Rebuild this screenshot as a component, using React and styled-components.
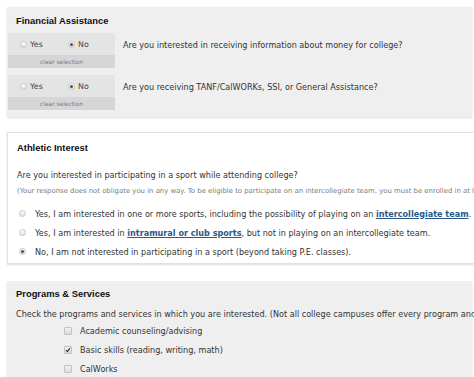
import React from 'react';
import styled, { createGlobalStyle } from 'styled-components';

const GlobalStyle = createGlobalStyle`
    html, body {
        margin: 0;
        padding: 0;
        background: #ffffff;
        overflow: hidden;
    }
    body {
        font-family: "DejaVu Sans", Verdana, sans-serif;
        color: #333333;
    }
`;

const Page = styled.div`
    width: 465px;
    padding: 7px 0 0 7px;
    display: flex;
    flex-direction: column;
`;

const Panel = styled.section`
    background: ${p => (p.$white ? '#ffffff' : '#efefef')};
    border: ${p => (p.$white ? '1px solid #e2e2e2' : 'none')};
    box-shadow: 0 1px 2px rgba(0, 0, 0, 0.14);
    margin-top: ${p => p.$gap || 0}px;
    margin-right: ${p => (p.$white ? '-20px' : '0')};
    padding-bottom: ${p => p.$bottom || 0}px;
    display: flex;
    flex-direction: column;
`;

const Title = styled.h2`
    margin: 0;
    height: ${p => p.$h}px;
    padding-left: 9px;
    display: flex;
    align-items: center;
    font-family: "Liberation Sans", Arial, sans-serif;
    font-size: 9.4px;
    font-weight: bold;
    color: #111111;
`;

const QuestionRow = styled.div`
    display: flex;
    align-items: flex-start;
    margin-top: ${p => p.$gap || 0}px;
`;

const Choice = styled.div`
    width: 107px;
    margin-left: 1px;
    background: #e4e4e4;
    display: flex;
    flex-direction: column;
`;

const ChoiceTop = styled.div`
    height: 22px;
    display: flex;
    align-items: center;
    padding-left: 12px;
`;

const ChoiceLabel = styled.label`
    display: flex;
    align-items: center;
    gap: 3px;
    width: ${p => p.$w || 'auto'};
    font-size: 7.9px;
    color: #444444;
`;

const ClearBar = styled.div`
    height: 13px;
    background: #d6d6d6;
    display: flex;
    align-items: center;
    justify-content: center;
    font-size: 5.9px;
    color: #6d7c90;
`;

const Question = styled.div`
    margin-left: 8px;
    height: 24px;
    line-height: 24px;
    font-size: 8.1px;
    white-space: nowrap;
`;

const Radio = styled.span`
    width: 7px;
    height: 7px;
    flex: none;
    box-sizing: border-box;
    border-radius: 50%;
    border: 1px solid #c6c6c6;
    background: linear-gradient(#ffffff, #e2e2e2);
    display: inline-flex;
    align-items: center;
    justify-content: center;
    &::after {
        content: '';
        width: 3px;
        height: 3px;
        border-radius: 50%;
        background: ${p => (p.$on ? '#505050' : 'transparent')};
    }
`;

const Text = styled.div`
    padding-left: 9px;
    margin-top: ${p => p.$gap || 0}px;
    height: ${p => p.$h}px;
    line-height: ${p => p.$h}px;
    font-size: ${p => (p.$small ? '6.9px' : '8.1px')};
    color: ${p => (p.$small ? '#7a7a7a' : '#333333')};
    white-space: nowrap;
`;

const OptionList = styled.div`
    display: flex;
    flex-direction: column;
    margin-top: ${p => p.$gap || 0}px;
    padding-left: ${p => p.$indent}px;
`;

const Option = styled.label`
    height: 19px;
    display: flex;
    align-items: center;
    gap: ${p => p.$gap}px;
    font-size: 8.1px;
    color: #333333;
    white-space: nowrap;
`;

const Link = styled.a`
    color: #2a5a8a;
    font-weight: bold;
    text-decoration: underline;
`;

const Box = styled.span`
    width: 8px;
    height: 8px;
    flex: none;
    box-sizing: border-box;
    border: 1px solid #c2c2c2;
    border-radius: 1px;
    background: linear-gradient(#f2f2f2, #dcdcdc);
    display: inline-flex;
    align-items: center;
    justify-content: center;
`;

const Check = () => (
    <svg width="6" height="6" viewBox="0 0 6 6">
        <path d="M1 3.2 L2.4 4.6 L5 1.2" fill="none" stroke="#333" strokeWidth="1.2" />
    </svg>
);

const RadioGroup = ({ yes }) => (
    <Choice>
        <ChoiceTop>
            <ChoiceLabel $w="48px"><Radio $on={yes} />Yes</ChoiceLabel>
            <ChoiceLabel><Radio $on={!yes} />No</ChoiceLabel>
        </ChoiceTop>
        <ClearBar>clear selection</ClearBar>
    </Choice>
);

const programs = [
    { label: 'Academic counseling/advising', on: false },
    { label: 'Basic skills (reading, writing, math)', on: true },
    { label: 'CalWorks', on: false },
];

export default function App() {
    return (
        <>
            <GlobalStyle />
            <Page>
                <Panel $bottom={7}>
                    <Title $h={26}>Financial Assistance</Title>
                    <QuestionRow>
                        <RadioGroup />
                        <Question>Are you interested in receiving information about money for college?</Question>
                    </QuestionRow>
                    <QuestionRow $gap={7}>
                        <RadioGroup />
                        <Question>Are you receiving TANF/CalWORKs, SSI, or General Assistance?</Question>
                    </QuestionRow>
                </Panel>

                <Panel $white $gap={15} $bottom={2}>
                    <Title $h={28}>Athletic Interest</Title>
                    <Text $gap={7} $h={14}>Are you interested in participating in a sport while attending college?</Text>
                    <Text $small $gap={3} $h={12}>
                        (Your response does not obligate you in any way. To be eligible to participate on an intercollegiate team, you must be enrolled in at least 12 units.)
                    </Text>
                    <OptionList $gap={7} $indent={11}>
                        <Option $gap={9}>
                            <Radio />
                            <span>Yes, I am interested in one or more sports, including the possibility of playing on an <Link>intercollegiate team</Link>.</span>
                        </Option>
                        <Option $gap={9}>
                            <Radio />
                            <span>Yes, I am interested in <Link>intramural or club sports</Link>, but not in playing on an intercollegiate team.</span>
                        </Option>
                        <Option $gap={9}>
                            <Radio $on />
                            <span>No, I am not interested in participating in a sport (beyond taking P.E. classes).</span>
                        </Option>
                    </OptionList>
                </Panel>

                <Panel $gap={17} $bottom={10}>
                    <Title $h={24}>Programs &amp; Services</Title>
                    <Text $gap={2} $h={14}>
                        Check the programs and services in which you are interested. (Not all college campuses offer every program and service.)
                    </Text>
                    <OptionList $indent={57}>
                        {programs.map(p => (
                            <Option key={p.label} $gap={8}>
                                <Box>{p.on && <Check />}</Box>
                                {p.label}
                            </Option>
                        ))}
                    </OptionList>
                </Panel>
            </Page>
        </>
    );
}
